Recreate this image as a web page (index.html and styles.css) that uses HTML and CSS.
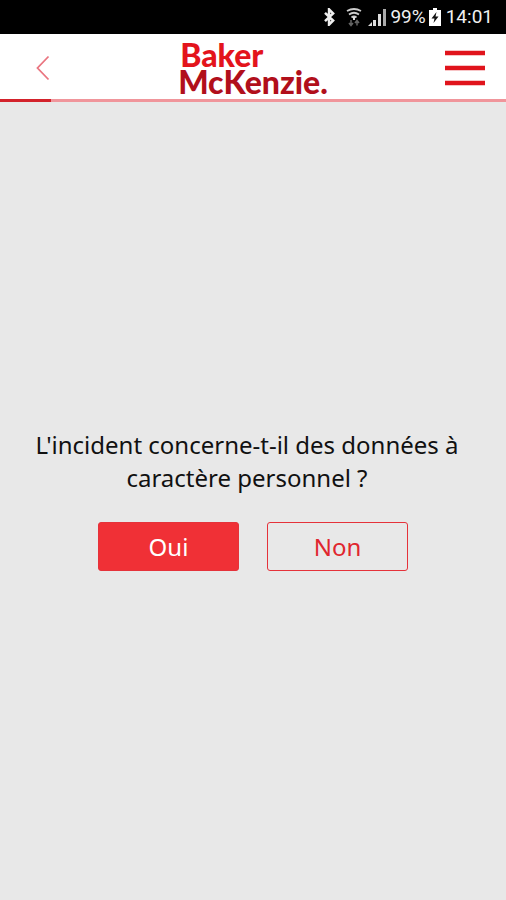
FILE: index.html
```html
<!DOCTYPE html>
<html lang="fr">
<head>
<meta charset="utf-8">
<meta name="viewport" content="width=device-width, initial-scale=1">
<title>Baker McKenzie</title>
<link rel="stylesheet" href="styles.css">
</head>
<body>
<div class="status">
  <svg class="bluetooth" width="13" height="18" viewBox="0 0 14 20" aria-hidden="true"><path d="M2 5.500l9 8.500-4.500 4.500v-17L11 6l-9 8.500" fill="none" stroke="#eee" stroke-width="2.800"/></svg>
  <svg class="wifi" width="16" height="20" viewBox="0 0 16 20" aria-hidden="true"><g fill="none" stroke="#ccc" stroke-width="1.800"><path d="M1 4q7-4 14 0M3 7.500q5-3.500 10 0M5.500 10.500q2.500-2 5 0"/></g><path d="M7 10h2v3H7z" fill="#ddd"/><path d="M5 13v5M3 16l2 2.500 2-2.500M11 18.500v-5M9 16l2-2.500 2 2.500" fill="none" stroke="#666" stroke-width="1.500"/></svg>
  <svg class="signal" width="18" height="18" viewBox="0 0 18 18" aria-hidden="true"><path d="M0 18l4-4v4zM5 12h3v6H5zM10 6h3v12h-3z" fill="#ddd"/><path d="M15 1h3v17h-3z" fill="#aaa"/></svg>
  <span class="percent">99%</span>
  <svg class="battery" width="12" height="18" viewBox="0 0 12 18" aria-hidden="true"><path d="M4 0h4v2h4v16H0V2h4z" fill="#fff"/><path d="M7.500 4L2.500 10.500h3L4.500 15l5-6.500h-3z" fill="#111"/></svg>
  <time class="clock">14:01</time>
</div>
<header class="header">
  <button class="icon-button back" aria-label="Retour"><svg width="14" height="26" viewBox="0 0 14 26" aria-hidden="true"><path d="M12.500 1.500L1.500 13l11 11.500" fill="none" stroke="#ea7580" stroke-width="1.800"/></svg></button>
  <div class="logo"><span class="logo-top">Baker</span><span class="logo-bottom">McKenzie.</span></div>
  <button class="icon-button menu" aria-label="Menu"><svg width="40" height="36" viewBox="0 0 40 36" aria-hidden="true"><path d="M0 3h40M0 18h40M0 33h40" stroke="#e0141c" stroke-width="4.400"/></svg></button>
</header>
<div class="progress"><div class="progress-done"></div></div>
<main class="main">
  <h1 class="question">L'incident concerne-t-il des données à caractère personnel ?</h1>
  <div class="answers">
    <button class="answer answer-yes">Oui</button>
    <button class="answer answer-no">Non</button>
  </div>
</main>
</body>
</html>
```
FILE: styles.css
```css
* { box-sizing: border-box; }
body {
  margin: 0;
  min-height: 100vh;
  display: flex;
  flex-direction: column;
  background: #e8e8e8;
  color: #111;
  font-family: "Noto Sans", "Open Sans", sans-serif;
}
button { margin: 0; font: inherit; cursor: pointer; }
svg { display: block; }
.status {
  height: 34px;
  padding: 0 13px;
  display: flex;
  align-items: center;
  justify-content: flex-end;
  background: #000;
  color: #f0f0f0;
  font: 19px/34px Roboto, sans-serif;
}
.wifi { margin-left: 10px; }
.signal { margin-left: 6px; }
.percent { margin-left: 4px; }
.battery { margin-left: 3px; }
.clock { margin-left: 5px; }
.header {
  height: 65px;
  padding: 2px 21px 0;
  display: grid;
  grid-template-columns: 1fr auto 1fr;
  align-items: center;
  background: #fff;
}
.icon-button { padding: 0; border: 0; background: none; }
.back { justify-self: start; padding: 4px 15px; }
.menu { justify-self: end; }
.logo {
  display: flex;
  flex-direction: column;
  font: 900 32px/27px Lato, sans-serif;
}
.logo-top { padding-left: 2px; color: #e3141c; }
.logo-bottom { color: #b10f1b; }
.progress { height: 3px; background: #f0959b; }
.progress-done { width: 51px; height: 3px; background: #d3222b; }
.main {
  flex: 1;
  padding: 0 24px 3px;
  display: flex;
  flex-direction: column;
  align-items: center;
  justify-content: center;
}
.question {
  margin: 0 0 28px;
  padding-right: 12px;
  font-size: 24px;
  font-weight: 400;
  line-height: 33px;
  text-align: center;
}
.answers { display: flex; gap: 28px; }
.answer {
  width: 141px;
  height: 49px;
  padding: 0;
  border: 1px solid #e5323a;
  border-radius: 3px;
  font-size: 24px;
  line-height: 33px;
}
.answer-yes { background: #f03036; color: #fff; }
.answer-no { background: transparent; color: #e0262e; }
```
